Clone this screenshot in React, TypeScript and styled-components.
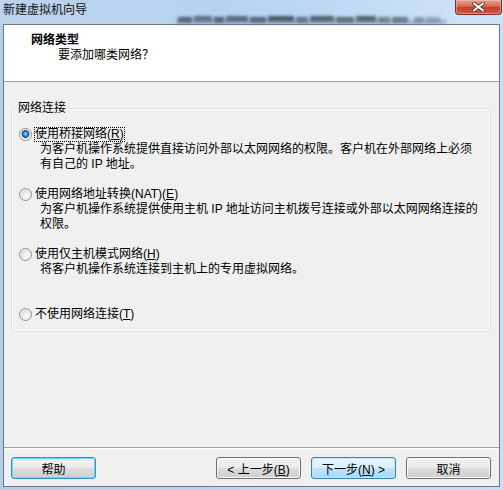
import React from "react";
import styled, { createGlobalStyle } from "styled-components";

const GlobalStyle = createGlobalStyle`
  html, body { margin: 0; padding: 0; background: #bcd4ee; }
  body {
    font-family: "Liberation Sans", "Noto Sans CJK SC", sans-serif;
    font-size: 12px;
    color: #000;
  }
`;

const Window = styled.div`
  width: 503px;
  height: 490px;
  display: flex;
  flex-direction: column;
  background: linear-gradient(to right, #b6cde6, #bcd6f1 45%, #c9dff5);
`;

const TitleBar = styled.div`
  position: relative;
  height: 24px;
  flex: none;
  display: flex;
  justify-content: space-between;
  align-items: flex-start;
  background: linear-gradient(to right, #bdd3eb 0%, #b6d2f1 45%, #c3dcf5 75%, #d0e4f8 100%);
`;

const TitleText = styled.div`
  position: relative;
  z-index: 1;
  padding-left: 3px;
  line-height: 20px;
  font-size: 12px;
  color: #101010;
`;

const Blur = styled.svg`
  position: absolute;
  left: 170px;
  top: 10px;
`;

const CloseButton = styled.div`
  position: relative;
  z-index: 1;
  width: 47px;
  height: 15px;
  margin-right: 1px;
  box-sizing: border-box;
  display: flex;
  align-items: center;
  justify-content: center;
  border: 1px solid #7a2e22;
  border-top: none;
  border-radius: 0 0 4px 4px;
  background: linear-gradient(#e3a08f 0%, #d6735f 40%, #c4412c 55%, #c95a42 100%);
  box-shadow: inset 0 0 0 1px rgba(255, 200, 180, 0.5);
`;

const Frame = styled.div`
  flex: 1;
  display: flex;
  padding: 0 3px 3px 3px;
`;

const Client = styled.div`
  flex: 1;
  display: flex;
  flex-direction: column;
  border: 1px solid #6a7888;
  background: #f0f0f0;
`;

const Header = styled.div`
  height: 57px;
  box-sizing: border-box;
  flex: none;
  background: #fff;
  border-bottom: 1px solid #a0a0a0;
  padding: 8px 0 0 27px;
  line-height: 15px;
`;

const HeaderTitle = styled.div`
  font-weight: bold;
`;

const HeaderSub = styled.div`
  padding-left: 27px;
`;

const Body = styled.div`
  flex: 1;
  padding: 19px 8px 0 7px;
`;

const Group = styled.fieldset`
  margin: 0;
  padding: 0;
  min-width: 0;
  border: 1px solid #d5dfe5;
  border-radius: 3px;
  box-shadow: inset 0 0 0 1px #fafbfc;
`;

const Legend = styled.legend`
  margin-left: 4px;
  padding: 0 2px;
  line-height: 14px;
`;

const Options = styled.div`
  display: grid;
  grid-template-rows: 60px 60px 60px auto;
  padding: 12px 0 9px 7px;
`;

const Option = styled.div`
  display: flex;
  flex-direction: column;
`;

const RadioLine = styled.div`
  display: flex;
  align-items: center;
  gap: 2px;
  height: 15px;
`;

const Radio = styled.span<{ $checked?: boolean }>`
  width: 13px;
  height: 13px;
  flex: none;
  box-sizing: border-box;
  border-radius: 50%;
  border: 1px solid #8e8f8f;
  background: ${(p) =>
    p.$checked
      ? "radial-gradient(circle at 50% 45%, #bfe6ff 0, #4aa0e6 1.5px, #1d64b0 3px, #0d3f7a 3.6px, #d8d8d8 4.2px, #ececec 5px, #f8f8f8 6px)"
      : "radial-gradient(circle at 60% 60%, #fbfbfb 0, #eeeeee 3px, #d9d9d9 6px)"};
  box-shadow: inset 0 0 0 1px #f4f4f4;
`;

const Label = styled.span<{ $focused?: boolean }>`
  line-height: 15px;
  padding: 0 1px;
  outline: ${(p) => (p.$focused ? "1px dotted #000" : "none")};
  outline-offset: -1px;
`;

const Mn = styled.span`
  text-decoration: underline;
  text-underline-offset: 1px;
`;

const Desc = styled.div`
  padding-left: 21px;
  line-height: 15px;
  white-space: nowrap;
`;

const Footer = styled.div`
  flex: none;
  display: flex;
  align-items: center;
  border-top: 1px solid #a0a0a0;
  box-shadow: inset 0 1px #fdfdfd;
  padding: 9px 8px 7px 7px;
`;

const Spacer = styled.div`
  flex: 1;
`;

const ButtonGroup = styled.div`
  display: flex;
  gap: 10px;
`;

const Button = styled.button<{ $variant?: "focus" | "default" }>`
  width: 85px;
  height: 22px;
  box-sizing: border-box;
  padding: 0;
  font: inherit;
  font-size: 12px;
  color: #000;
  border-radius: 3px;
  border: 1px solid
    ${(p) => (p.$variant === "focus" ? "#2d95d3" : p.$variant === "default" ? "#3c7fb1" : "#707070")};
  background: ${(p) =>
    p.$variant === "default"
      ? "linear-gradient(#eaf6fd 0%, #d9f0fc 50%, #bee6fd 51%, #a7d9f5 100%)"
      : "linear-gradient(#f2f2f2 0%, #ebebeb 50%, #dddddd 51%, #cfcfcf 100%)"};
  box-shadow: ${(p) =>
    p.$variant === "focus"
      ? "inset 0 0 0 1px #6cd6f6"
      : p.$variant === "default"
      ? "inset 0 0 0 1px #c3e6f9"
      : "inset 0 0 0 1px #fbfbfb"};
`;

export default function App() {
  const blocks = [
    [8, 4, 14, 0.8], [24, 3, 18, 0.7], [44, 4, 10, 0.85], [56, 3, 22, 0.75],
    [80, 4, 16, 0.8], [98, 3, 26, 0.85], [126, 4, 12, 0.7], [140, 3, 24, 0.8],
    [166, 4, 18, 0.75], [186, 3, 20, 0.8], [208, 4, 12, 0.6], [222, 4, 16, 0.65],
    [244, 4, 10, 0.45], [256, 4, 14, 0.35],
  ];
  return (
    <>
      <GlobalStyle />
      <Window>
        <TitleBar>
          <Blur width="290" height="16" viewBox="0 0 290 16">
            <defs>
              <filter id="bl" x="-20%" y="-100%" width="140%" height="300%">
                <feGaussianBlur stdDeviation="1.5" />
              </filter>
            </defs>
            <g filter="url(#bl)">
              {blocks.map(([x, y, w, o], i) => (
                <rect key={i} x={x} y={y + 3} width={w} height={6} fill="#34404e" opacity={o} />
              ))}
              <rect x="6" y="10" width="270" height="4" fill="#6f849c" opacity="0.5" />
            </g>
          </Blur>
          <TitleText>新建虚拟机向导</TitleText>
          <CloseButton>
            <svg width="13" height="10" viewBox="0 0 13 10">
              <path d="M2 1.5 L11 8.5 M11 1.5 L2 8.5" stroke="#5a3a34" strokeWidth="3.6" strokeLinecap="square" />
              <path d="M2 1.5 L11 8.5 M11 1.5 L2 8.5" stroke="#ffffff" strokeWidth="1.9" strokeLinecap="square" />
            </svg>
          </CloseButton>
        </TitleBar>
        <Frame>
          <Client>
            <Header>
              <HeaderTitle>网络类型</HeaderTitle>
              <HeaderSub>要添加哪类网络？</HeaderSub>
            </Header>
            <Body>
              <Group>
                <Legend>网络连接</Legend>
                <Options>
                  <Option>
                    <RadioLine>
                      <Radio $checked />
                      <Label $focused>
                        使用桥接网络(<Mn>R</Mn>)
                      </Label>
                    </RadioLine>
                    <Desc>
                      为客户机操作系统提供直接访问外部以太网网络的权限。客户机在外部网络上必须
                      <br />
                      有自己的 IP 地址。
                    </Desc>
                  </Option>
                  <Option>
                    <RadioLine>
                      <Radio />
                      <Label>
                        使用网络地址转换(NAT)(<Mn>E</Mn>)
                      </Label>
                    </RadioLine>
                    <Desc>
                      为客户机操作系统提供使用主机 IP 地址访问主机拨号连接或外部以太网网络连接的
                      <br />
                      权限。
                    </Desc>
                  </Option>
                  <Option>
                    <RadioLine>
                      <Radio />
                      <Label>
                        使用仅主机模式网络(<Mn>H</Mn>)
                      </Label>
                    </RadioLine>
                    <Desc>将客户机操作系统连接到主机上的专用虚拟网络。</Desc>
                  </Option>
                  <Option>
                    <RadioLine>
                      <Radio />
                      <Label>
                        不使用网络连接(<Mn>T</Mn>)
                      </Label>
                    </RadioLine>
                  </Option>
                </Options>
              </Group>
            </Body>
            <Footer>
              <Button $variant="focus">帮助</Button>
              <Spacer />
              <ButtonGroup>
                <Button>
                  &lt; 上一步(<Mn>B</Mn>)
                </Button>
                <Button $variant="default">
                  下一步(<Mn>N</Mn>) &gt;
                </Button>
                <Button>取消</Button>
              </ButtonGroup>
            </Footer>
          </Client>
        </Frame>
      </Window>
    </>
  );
}
